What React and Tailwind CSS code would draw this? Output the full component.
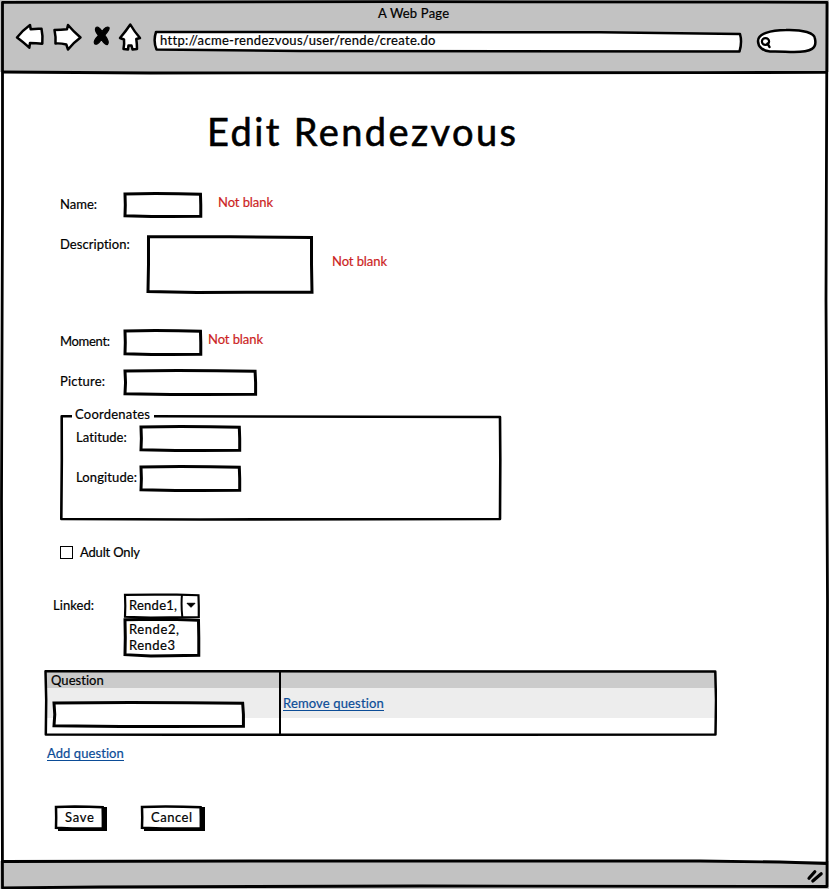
import { useLayoutEffect, useRef } from "react";

// Single line of text, tracked so that it spans exactly `w` pixels.
function Text({ w, className = "", children }) {
  const ref = useRef(null);
  useLayoutEffect(() => {
    const el = ref.current;
    el.style.letterSpacing = "0px";
    const range = document.createRange();
    range.selectNodeContents(el);
    const natural = range.getBoundingClientRect().width;
    el.style.letterSpacing = `${(w - natural) / (children.length - 1)}px`;
  }, [w, children]);
  return (
    <span
      ref={ref}
      className={`block shrink-0 whitespace-nowrap ${className}`}
      style={{ width: w }}
    >
      {children}
    </span>
  );
}

// Box with a hand-drawn outline.
function Sketch({ className = "", fill = "none", thick = 3, tall = false, children }) {
  return (
    <div className={`relative shrink-0 ${className}`}>
      <div className="pointer-events-none absolute inset-x-[1.5px] inset-y-[2px]">
        <svg
          className="block size-full overflow-visible"
          viewBox="0 0 100 100"
          preserveAspectRatio="none"
        >
          <path
            d={
              tall
                ? "M0.3 -0.5 L50 -0.5 L99.7 0.8 L99.7 50 L100 100.5 L60 100.5 L30 100.8 L0 99 L0.3 50 L0.3 -0.5Z"
                : "M0 -0.5 L40 -2 L70 -1.5 L99.3 1 L99.7 50 L99.7 101 L60 102 L35 102.5 L0 99 L0.4 50 L0 -0.5Z"
            }
            fill={fill}
            stroke="#000"
            strokeWidth={thick}
            strokeLinejoin="miter"
            vectorEffect="non-scaling-stroke"
          />
        </svg>
      </div>
      {children}
    </div>
  );
}

const ink = { stroke: "#000", strokeWidth: 2.5, strokeLinejoin: "round", strokeLinecap: "round" };

function Toolbar() {
  return (
    <header className="h-[72px] shrink-0 bg-[#c2c2c2] pt-[5px]">
      <div className="flex pl-[378px]">
        <Text w={71}>A Web Page</Text>
      </div>
      <div className="flex h-[34px] items-start pl-[14px]">
        <svg className="h-[34px] w-[130px] shrink-0" viewBox="14 21 130 34" fill="#fff" {...ink}>
          <path d="M17 37.5 Q23 30 30 25 L30.7 29.3 Q37 28.3 41.5 28.8 Q43 36 42.3 43.7 Q36 43 30 43 L29.3 47.7 Q22 41 17 37.5Z" />
          <path d="M54.5 30 Q61 30 67 29.3 L68 25 Q73 31 80.5 37.5 Q73 43 68 49.5 L66.3 44.5 Q60 43 55.5 43.5 Q56 37 54.5 30Z" />
          <path
            d="M96 27.5 Q94 30 98.5 35.5 Q93 41 94.5 43.5 Q97 46 101.5 39.5 Q105 45.5 107.5 44.5 Q110 42 104.8 35 Q110 29.5 109 27.5 Q106.5 25.5 102 31.5 Q98.5 26 96 27.5Z"
            fill="#000"
            strokeWidth="1.2"
          />
          <path d="M130.3 24.5 Q134 31 140 38 L136.3 39 Q137 44 137 49 L132.5 49.5 L131.5 45.5 H128.5 L128 49.5 L123.5 49 Q124.5 44 124 39.5 L120 38 Q126 31 130.3 24.5Z" />
        </svg>
        <div className="relative mt-[10px] ml-[9px] h-[22px] w-[590px] shrink-0 pl-[7px]">
          <svg
            className="absolute inset-0 size-full overflow-visible"
            viewBox="153 31 590 22"
            fill="#fff"
            {...ink}
          >
            <path d="M156 32 L600 32.3 L740 34 Q742.3 42 739.5 51.5 L300 51 L156.5 49.5 Q153 41 156 32Z" />
          </svg>
          <Text w={275} className="relative mt-px">
            http://acme-rendezvous/user/rende/create.do
          </Text>
        </div>
        <svg className="mt-[7px] ml-[12px] h-[26px] w-[64px] shrink-0" viewBox="755 28 64 26" fill="#fff" {...ink}>
          <path d="M758 41 C758 34 770 30 786 30 C803 29.5 815 33 815 39 C817 48 812 52 794 52 C786 52 780 51 770 51.5 C763 51 758 47 758 41Z" />
          <ellipse cx="765.5" cy="41.5" rx="3.6" ry="3.4" strokeWidth="2.2" />
          <path d="M767.5 43.5 L769.5 47" fill="none" />
        </svg>
      </div>
    </header>
  );
}

function FrameLines() {
  return (
    <svg
      className="pointer-events-none absolute inset-0 h-[889px] w-[829px]"
      viewBox="0 0 829 889"
      fill="none"
      stroke="#000"
      strokeWidth="2.8"
      strokeLinejoin="round"
    >
      <path d="M2.5 2.3 L400 1.7 L827 2.3 L826 300 L827.5 600 L827 886.5 L420 886 L100 887 L2.5 888 L1.5 500 L2.5 200Z" />
      <path d="M2 72 L150 73 L400 72.8 L700 72.7 L827 72.3" />
      <path d="M2 861.5 L250 861 L700 861 L780 862 L827 863.5" />
      <path d="M809 878.3 L814.8 871.7 M812.8 881 L821.2 873.8" strokeWidth="3.2" strokeLinecap="round" />
    </svg>
  );
}

function Action({ w, className, children }) {
  return (
    <button className={`relative h-[27px] text-left ${className}`}>
      <span className="absolute top-[3px] right-0 bottom-0 left-[4px] bg-black" />
      <Sketch fill="#fff" thick={2.5} className="mr-[3px] h-[25px] pt-[4px] pl-[11px]">
        <Text w={w} className="relative">{children}</Text>
      </Sketch>
    </button>
  );
}

export default function App() {
  return (
    <div className="relative flex h-[889px] w-[829px] flex-col overflow-hidden bg-white font-['Lato','Noto_Sans',sans-serif] text-[13px] leading-[16px] text-black [-webkit-text-stroke:0.2px_currentColor]">
      <Toolbar />
      <main className="flex h-[789px] shrink-0 flex-col">
        <h1 className="mt-[35px] ml-[207px] text-[38px] leading-[48px] [-webkit-text-stroke:0.6px_currentColor]">
          <Text w={309}>Edit Rendezvous</Text>
        </h1>

        <div className="mt-[37px] flex h-[26px] pl-[60px]">
          <Text w={37} className="mt-[4px]">Name:</Text>
          <Sketch className="ml-[26px] h-[26px] w-[79px]" />
          <Text w={55} className="mt-[2px] ml-[16px] text-[#cc1f24]">Not blank</Text>
        </div>

        <div className="mt-[17px] flex h-[59px] pl-[60px]">
          <Text w={70} className="mt-px">Description:</Text>
          <Sketch tall className="ml-[16px] h-[59px] w-[167px]" />
          <Text w={55} className="mt-[18px] ml-[19px] text-[#cc1f24]">Not blank</Text>
        </div>

        <div className="mt-[35px] flex h-[27px] pl-[60px]">
          <Text w={50} className="mt-[4px]">Moment:</Text>
          <Sketch className="ml-[13px] h-[27px] w-[79px]" />
          <Text w={55} className="mt-[2px] ml-[6px] text-[#cc1f24]">Not blank</Text>
        </div>

        <div className="mt-[13px] flex h-[27px] pl-[60px]">
          <Text w={45} className="mt-[4px]">Picture:</Text>
          <Sketch className="ml-[18px] h-[27px] w-[134px]" />
        </div>

        <section className="relative mt-[18px] ml-[60px] flex h-[107px] w-[442px] flex-col">
          <svg
            className="absolute inset-0 size-full"
            viewBox="60 414 442 107"
            fill="none"
            stroke="#000"
            strokeWidth="2.6"
            strokeLinejoin="round"
          >
            <path d="M72 416.3 L61.7 416.3 L61.8 460 L61.3 519 L200 519.5 L500 519 L500.3 460 L500 417 L154 416.2" />
          </svg>
          <Text w={75} className="relative mt-[-8px] ml-[15px]">Coordenates</Text>
          <div className="mt-[3px] flex h-[27px] pl-[16px]">
            <Text w={51} className="mt-[4px]">Latitude:</Text>
            <Sketch className="ml-[12px] h-[27px] w-[102px]" />
          </div>
          <div className="mt-[13px] flex h-[27px] pl-[16px]">
            <Text w={61} className="mt-[4px]">Longitude:</Text>
            <Sketch className="ml-[2px] h-[27px] w-[102px]" />
          </div>
        </section>

        <label className="mt-[23px] flex h-[16px] pl-[60px]">
          <span className="mt-[2px] size-[13px] border border-black" />
          <Text w={60} className="ml-[7px]">Adult Only</Text>
        </label>

        <div className="mt-[33px] flex h-[64px] pl-[53px]">
          <Text w={41} className="mt-[4px]">Linked:</Text>
          <div className="ml-[29px] w-[77px]">
            <Sketch thick={2.2} className="flex h-[26px] pt-[4px] pl-[6px]">
              <Text w={48}>Rende1,</Text>
              <svg className="mt-[-3px] ml-[3px] h-[24px] w-[18px]" viewBox="180 595 18 24">
                <path d="M182 595 Q181 606 182.3 618" fill="none" stroke="#000" strokeWidth="2" />
                <path d="M187 604.3 H195 L191 608.3Z" stroke="#000" strokeLinejoin="round" />
              </svg>
            </Sketch>
            <Sketch className="mt-[-1px] h-[39px] pt-[3px] pl-[6px]">
              <Text w={50}>Rende2,</Text>
              <Text w={46}>Rende3</Text>
            </Sketch>
          </div>
        </div>

        <div className="relative mt-[13px] ml-[44px] flex h-[66px] w-[673px] p-[2px] pb-[18px]">
          <div className="w-[235px]">
            <div className="h-[16px] bg-[#cbcbcb] pl-[5px]">
              <Text w={53}>Question</Text>
            </div>
            <div className="h-[30px] bg-[#ededed] pt-[13px] pl-[6px]">
              <Sketch fill="#fff" className="h-[27px] w-[193px]" />
            </div>
          </div>
          <div className="flex-1">
            <div className="h-[16px] bg-[#cbcbcb]" />
            <div className="h-[30px] bg-[#ededed] pt-[7px] pl-[2px] text-[#0b4c97]">
              <Text w={101} className="h-[16px] border-b border-current">Remove question</Text>
            </div>
          </div>
          <svg
            className="pointer-events-none absolute inset-0 size-full"
            viewBox="44 670 673 66"
            fill="none"
            stroke="#000"
            strokeWidth="2.5"
            strokeLinejoin="round"
          >
            <path d="M45.5 671.3 L230 671.3 L715.3 671.6 L716 700 L715.5 734.6 L200 734.8 L45.8 734.4 L46.2 700Z" />
            <path d="M280 672 V735" strokeWidth="2" />
          </svg>
        </div>

        <div className="mt-[9px] flex pl-[47px] text-[#0b4c97]">
          <Text w={77} className="h-[16px] border-b border-current">Add question</Text>
        </div>

        <div className="mt-[43px] flex pl-[54px]">
          <Action w={29} className="w-[53px]">Save</Action>
          <Action w={41} className="ml-[33px] w-[65px]">Cancel</Action>
        </div>
      </main>
      <footer className="flex-1 bg-[#c2c2c2]" />
      <FrameLines />
    </div>
  );
}
